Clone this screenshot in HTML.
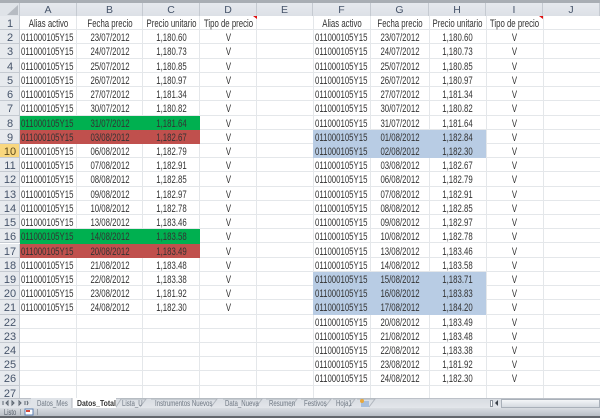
<!DOCTYPE html>
<html><head><meta charset="utf-8"><style>
html,body{margin:0;padding:0;background:#fff}
#w{position:relative;width:600px;height:418px;overflow:hidden;background:#fff;font-family:"Liberation Sans",sans-serif;color:#333}
.abs{position:absolute}
.v{position:absolute;top:16px;height:382px;width:1px;background:#e4e7ea}
.hd{position:absolute;top:3px;height:13px;font-size:10.5px;line-height:15px;text-align:center;color:#46546a;background:linear-gradient(#e6e9ee,#dce0e6);border-right:1px solid #c5cad1;box-sizing:border-box}
.r{position:absolute;left:0;width:600px;height:14.22px;line-height:15px;font-size:11px;box-shadow:inset 0 -1px 0 #e4e7ea}
.r span{position:absolute;top:1px;white-space:nowrap;transform:scaleX(.71);text-align:center}
.r .n{left:0;top:0;width:20px;height:14.22px;line-height:17px;background:#e7eaee;color:#46546a;transform:none;font-size:11px;box-shadow:inset -1px -1px 0 #c5cad1}
.a{left:21px;transform-origin:0 50%!important}
.b{left:67px;width:86px}.c{left:133px;width:77px}.d{left:190px;width:77px}
.f{left:315px;transform-origin:0 50%!important}
.g{left:361px;width:78px}.h{left:419px;width:77px}.k{left:476px;width:77px}
.m{left:20px;width:57px}.m2{left:313px;width:58px}
.fill{position:absolute;height:14.4px}
.tab{position:absolute;top:399px;font-size:8px;line-height:9px;color:#6f7883;white-space:nowrap;transform:scaleX(.76);transform-origin:0 50%;filter:blur(.25px)}
#grid{position:absolute;left:0;top:0;width:600px;height:398px;filter:blur(.35px)}
.t span:not(.n){top:.5px}
</style></head><body><div id="w">
<div id="grid">
<div class="abs" style="left:0;top:0;width:600px;height:3px;background:#a9aeb4"></div>
<div class="hd" style="left:0;width:20px;background:#dfe3e8"></div>
<svg class="abs" style="left:7px;top:5px" width="11" height="10"><path d="M11 0V10H0Z" fill="#b6bbc2"/></svg>
<div class="hd" style="left:20px;width:57px">A</div>
<div class="hd" style="left:77px;width:66px">B</div>
<div class="hd" style="left:143px;width:57px">C</div>
<div class="hd" style="left:200px;width:57px">D</div>
<div class="hd" style="left:257px;width:56px">E</div>
<div class="hd" style="left:313px;width:58px">F</div>
<div class="hd" style="left:371px;width:58px">G</div>
<div class="hd" style="left:429px;width:57px">H</div>
<div class="hd" style="left:486px;width:57px">I</div>
<div class="hd" style="left:543px;width:57px">J</div>

<div class="v" style="left:76px"></div><div class="v" style="left:142px"></div><div class="v" style="left:199px"></div><div class="v" style="left:256px"></div><div class="v" style="left:313px"></div><div class="v" style="left:370px"></div><div class="v" style="left:429px"></div><div class="v" style="left:486px"></div><div class="v" style="left:543px"></div>

<div class="r t" style="top:16px"><span class="n">1</span><span class="m">Alias activo</span><span class="b">Fecha precio</span><span class="c">Precio unitario</span><span class="d">Tipo de precio</span><span class="m2">Alias activo</span><span class="g">Fecha precio</span><span class="h">Precio unitario</span><span class="k">Tipo de precio</span></div>
<div class="r" style="top:30.2px"><span class="n">2</span><span class="a">011000105Y15</span><span class="b">23/07/2012</span><span class="c">1,180.60</span><span class="d">V</span><span class="f">011000105Y15</span><span class="g">23/07/2012</span><span class="h">1,180.60</span><span class="k">V</span></div>
<div class="r" style="top:44.42px"><span class="n">3</span><span class="a">011000105Y15</span><span class="b">24/07/2012</span><span class="c">1,180.73</span><span class="d">V</span><span class="f">011000105Y15</span><span class="g">24/07/2012</span><span class="h">1,180.73</span><span class="k">V</span></div>
<div class="r" style="top:58.64px"><span class="n">4</span><span class="a">011000105Y15</span><span class="b">25/07/2012</span><span class="c">1,180.85</span><span class="d">V</span><span class="f">011000105Y15</span><span class="g">25/07/2012</span><span class="h">1,180.85</span><span class="k">V</span></div>
<div class="r" style="top:72.86px"><span class="n">5</span><span class="a">011000105Y15</span><span class="b">26/07/2012</span><span class="c">1,180.97</span><span class="d">V</span><span class="f">011000105Y15</span><span class="g">26/07/2012</span><span class="h">1,180.97</span><span class="k">V</span></div>
<div class="r" style="top:87.08px"><span class="n">6</span><span class="a">011000105Y15</span><span class="b">27/07/2012</span><span class="c">1,181.34</span><span class="d">V</span><span class="f">011000105Y15</span><span class="g">27/07/2012</span><span class="h">1,181.34</span><span class="k">V</span></div>
<div class="r" style="top:101.3px"><span class="n">7</span><span class="a">011000105Y15</span><span class="b">30/07/2012</span><span class="c">1,180.82</span><span class="d">V</span><span class="f">011000105Y15</span><span class="g">30/07/2012</span><span class="h">1,180.82</span><span class="k">V</span></div>
<div class="r" style="top:115.52px"><div class="fill" style="left:20px;width:180px;background:#00b050"></div><span class="n">8</span><span class="a">011000105Y15</span><span class="b">31/07/2012</span><span class="c">1,181.64</span><span class="d">V</span><span class="f">011000105Y15</span><span class="g">31/07/2012</span><span class="h">1,181.64</span><span class="k">V</span></div>
<div class="r" style="top:129.74px"><div class="fill" style="left:20px;width:180px;background:#c0504d"></div><div class="fill" style="left:313px;width:173px;background:#b8cce4"></div><span class="n">9</span><span class="a">011000105Y15</span><span class="b">03/08/2012</span><span class="c">1,182.67</span><span class="d">V</span><span class="f">011000105Y15</span><span class="g">01/08/2012</span><span class="h">1,182.84</span><span class="k">V</span></div>
<div class="r" style="top:143.96px"><div class="fill" style="left:313px;width:173px;background:#b8cce4"></div><span class="n" style="background:#f9d77e;color:#5c4a1e">10</span><span class="a">011000105Y15</span><span class="b">06/08/2012</span><span class="c">1,182.79</span><span class="d">V</span><span class="f">011000105Y15</span><span class="g">02/08/2012</span><span class="h">1,182.30</span><span class="k">V</span></div>
<div class="r" style="top:158.18px"><span class="n">11</span><span class="a">011000105Y15</span><span class="b">07/08/2012</span><span class="c">1,182.91</span><span class="d">V</span><span class="f">011000105Y15</span><span class="g">03/08/2012</span><span class="h">1,182.67</span><span class="k">V</span></div>
<div class="r" style="top:172.4px"><span class="n">12</span><span class="a">011000105Y15</span><span class="b">08/08/2012</span><span class="c">1,182.85</span><span class="d">V</span><span class="f">011000105Y15</span><span class="g">06/08/2012</span><span class="h">1,182.79</span><span class="k">V</span></div>
<div class="r" style="top:186.62px"><span class="n">13</span><span class="a">011000105Y15</span><span class="b">09/08/2012</span><span class="c">1,182.97</span><span class="d">V</span><span class="f">011000105Y15</span><span class="g">07/08/2012</span><span class="h">1,182.91</span><span class="k">V</span></div>
<div class="r" style="top:200.84px"><span class="n">14</span><span class="a">011000105Y15</span><span class="b">10/08/2012</span><span class="c">1,182.78</span><span class="d">V</span><span class="f">011000105Y15</span><span class="g">08/08/2012</span><span class="h">1,182.85</span><span class="k">V</span></div>
<div class="r" style="top:215.06px"><span class="n">15</span><span class="a">011000105Y15</span><span class="b">13/08/2012</span><span class="c">1,183.46</span><span class="d">V</span><span class="f">011000105Y15</span><span class="g">09/08/2012</span><span class="h">1,182.97</span><span class="k">V</span></div>
<div class="r" style="top:229.28px"><div class="fill" style="left:20px;width:180px;background:#00b050"></div><span class="n">16</span><span class="a">011000105Y15</span><span class="b">14/08/2012</span><span class="c">1,183.58</span><span class="d">V</span><span class="f">011000105Y15</span><span class="g">10/08/2012</span><span class="h">1,182.78</span><span class="k">V</span></div>
<div class="r" style="top:243.5px"><div class="fill" style="left:20px;width:180px;background:#c0504d"></div><span class="n">17</span><span class="a">011000105Y15</span><span class="b">20/08/2012</span><span class="c">1,183.49</span><span class="d">V</span><span class="f">011000105Y15</span><span class="g">13/08/2012</span><span class="h">1,183.46</span><span class="k">V</span></div>
<div class="r" style="top:257.72px"><span class="n">18</span><span class="a">011000105Y15</span><span class="b">21/08/2012</span><span class="c">1,183.48</span><span class="d">V</span><span class="f">011000105Y15</span><span class="g">14/08/2012</span><span class="h">1,183.58</span><span class="k">V</span></div>
<div class="r" style="top:271.94px"><div class="fill" style="left:313px;width:173px;background:#b8cce4"></div><span class="n">19</span><span class="a">011000105Y15</span><span class="b">22/08/2012</span><span class="c">1,183.38</span><span class="d">V</span><span class="f">011000105Y15</span><span class="g">15/08/2012</span><span class="h">1,183.71</span><span class="k">V</span></div>
<div class="r" style="top:286.16px"><div class="fill" style="left:313px;width:173px;background:#b8cce4"></div><span class="n">20</span><span class="a">011000105Y15</span><span class="b">23/08/2012</span><span class="c">1,181.92</span><span class="d">V</span><span class="f">011000105Y15</span><span class="g">16/08/2012</span><span class="h">1,183.83</span><span class="k">V</span></div>
<div class="r" style="top:300.38px"><div class="fill" style="left:313px;width:173px;background:#b8cce4"></div><span class="n">21</span><span class="a">011000105Y15</span><span class="b">24/08/2012</span><span class="c">1,182.30</span><span class="d">V</span><span class="f">011000105Y15</span><span class="g">17/08/2012</span><span class="h">1,184.20</span><span class="k">V</span></div>
<div class="r" style="top:314.6px"><span class="n">22</span><span class="f">011000105Y15</span><span class="g">20/08/2012</span><span class="h">1,183.49</span><span class="k">V</span></div>
<div class="r" style="top:328.82px"><span class="n">23</span><span class="f">011000105Y15</span><span class="g">21/08/2012</span><span class="h">1,183.48</span><span class="k">V</span></div>
<div class="r" style="top:343.04px"><span class="n">24</span><span class="f">011000105Y15</span><span class="g">22/08/2012</span><span class="h">1,183.38</span><span class="k">V</span></div>
<div class="r" style="top:357.26px"><span class="n">25</span><span class="f">011000105Y15</span><span class="g">23/08/2012</span><span class="h">1,181.92</span><span class="k">V</span></div>
<div class="r" style="top:371.48px"><span class="n">26</span><span class="f">011000105Y15</span><span class="g">24/08/2012</span><span class="h">1,182.30</span><span class="k">V</span></div>
<div class="r" style="top:385.7px"><span class="n">27</span></div>

<svg class="abs" style="left:253px;top:16px" width="4" height="3"><path d="M0 0H4V3Z" fill="#e01010"/></svg>
<svg class="abs" style="left:539px;top:16px" width="4" height="3"><path d="M0 0H4V3Z" fill="#e01010"/></svg>
</div>

<div class="abs" style="left:0;top:398px;width:600px;height:10px;background:linear-gradient(#d8dce2,#e3e6ea);border-top:1px solid #bcc1c8;box-sizing:border-box"></div>
<div class="abs" style="left:31px;top:398px;width:41px;height:10px;background:#dfe3e8"></div>
<div class="abs" style="left:72px;top:398px;width:44px;height:10px;background:#fff"></div>
<svg class="abs" style="left:0;top:398px" width="490" height="10" fill="none" stroke="#b0b6bd" stroke-width="1">
<path d="M72 10V0M116 9L121 1H146L140 9M151 1H217L211 9M223 1H262L256 9M266 1H297L291 9M301 1H331L325 9M333 1H355L349 9M357 1H375L369 9"/>
<path d="M3 3V7M6 5L8 3V7ZM12 3V7L14 5ZM19 3L21 5L19 7ZM25 3V7M27 3L28 5L27 7" stroke="#5a636e"/>
</svg>
<div class="tab" style="left:37px">Datos_Mes</div>
<div class="tab" style="left:77px;color:#333;font-weight:bold;transform:scaleX(.86)">Datos_Total</div>
<div class="tab" style="left:122px">Lista_U</div>
<div class="tab" style="left:155px">Instrumentos Nuevos</div>
<div class="tab" style="left:225px">Data_Nueva</div>
<div class="tab" style="left:269px">Resumen</div>
<div class="tab" style="left:304px">Festivos</div>
<div class="tab" style="left:336px">Hoja1</div>
<svg class="abs" style="left:359px;top:399px" width="11" height="8"><rect x="2" y="2" width="8" height="6" fill="#a8bfdc"/><circle cx="3" cy="2" r="2" fill="#e8a83c"/></svg>
<div class="abs" style="left:490px;top:400px;width:3px;height:7px;background:#fff;border:1px solid #8c939c;box-sizing:border-box"></div>
<svg class="abs" style="left:495px;top:400px" width="4" height="6"><path d="M3 0V6L0 3Z" fill="#3a4048"/></svg>
<div class="abs" style="left:501px;top:399px;width:99px;height:9px;background:linear-gradient(#f4f6f8,#d5dae0);border:1px solid #a9b0b9;box-sizing:border-box"></div>

<div class="abs" style="left:0;top:408px;width:600px;height:8px;background:linear-gradient(#d9dde2,#b9bec5)"></div>
<div class="abs" style="left:4px;top:408px;font-size:8px;line-height:9px;color:#555e69;transform:scaleX(.72);transform-origin:0 50%">Listo</div>
<div class="abs" style="left:20px;top:409px;width:1px;height:6px;background:#9aa0a8"></div>
<div class="abs" style="left:37px;top:409px;width:1px;height:6px;background:#9aa0a8"></div>
<svg class="abs" style="left:24px;top:408px" width="10" height="8"><rect x="1" y="1" width="8" height="6" fill="#fff" stroke="#5c7fb0"/><rect x="2" y="2" width="4" height="2" fill="#d84a3a"/></svg>
<div class="abs" style="left:0;top:416px;width:600px;height:2px;background:#63676c"></div>
</div></body></html>
